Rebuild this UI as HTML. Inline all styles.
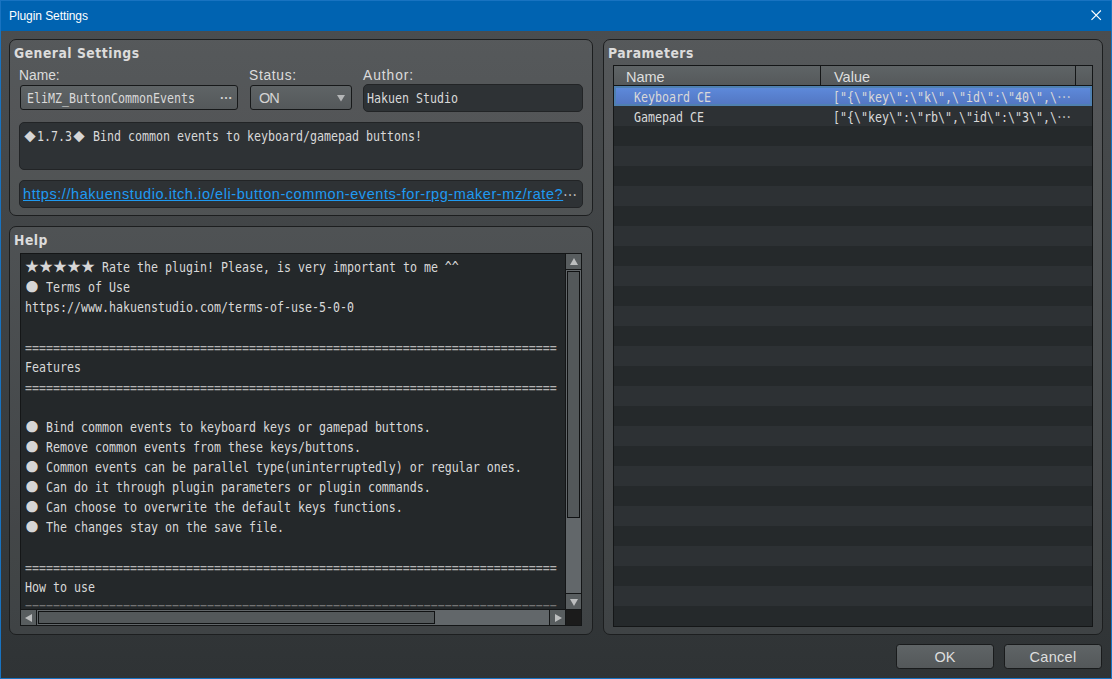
<!DOCTYPE html>
<html lang="en">
<head>
<meta charset="utf-8">
<title>Plugin Settings</title>
<style>
html,body{margin:0;padding:0;}
body{width:1112px;height:679px;overflow:hidden;background:#1873c1;font-family:"Liberation Sans",sans-serif;color:#dedede;}
*{box-sizing:border-box;}
#win{position:absolute;left:0;top:0;width:1112px;height:679px;background:#1873c1;overflow:hidden;}
#title{position:absolute;left:1px;top:1px;width:1110px;height:30px;background:#0063b1;}
#title .t{position:absolute;left:8px;top:7px;font-size:12px;line-height:16px;color:#fff;white-space:pre;letter-spacing:-0.08px;}
#client{position:absolute;left:1px;top:31px;width:1110px;height:647px;background:linear-gradient(#4a4d4f,#2f3335);}
.abs{position:absolute;}
.grp{position:absolute;border:1px solid #1c1e1f;border-radius:7px;background:rgba(255,255,255,0.07);box-shadow:inset 0 0 0 0 #000;}
.gt{position:absolute;font-family:"DejaVu Sans Condensed","DejaVu Sans","Liberation Sans",sans-serif;font-weight:bold;font-size:13.8px;line-height:18px;color:#dcdcdc;white-space:pre;letter-spacing:0.5px;}
.lb{position:absolute;font-size:13.8px;line-height:16px;color:#dcdcdc;white-space:pre;letter-spacing:-0.45px;}
.fld{position:absolute;border:1px solid #17191a;border-radius:3px;background:linear-gradient(#5f6466,#54585a);}
.dark{position:absolute;border:1px solid #222426;border-radius:5px;background:#2e3235;}
.m{position:absolute;font-family:"DejaVu Sans Mono","Liberation Mono",monospace;font-size:13.6px;line-height:20px;height:20px;white-space:pre;transform:scaleX(0.855);transform-origin:0 0;color:#d9d9d9;}
.s{position:absolute;font-family:"Noto Sans CJK JP","DejaVu Sans",sans-serif;font-size:14px;line-height:20px;height:20px;width:14px;text-align:center;color:#d6d6d6;white-space:pre;}
.btn{position:absolute;border:1px solid #191b1c;border-radius:3.5px;background:linear-gradient(#5f6466,#54585a);text-align:center;font-size:14.5px;line-height:25px;color:#dedede;}

.st{font-size:14px;}
.ci{font-size:12.5px;}
.eq{color:#b4b4b4;}
.sbb{background:#585d5f;}
.thumb{background:#53585a;border:1px solid #101213;}
.hdr{background:linear-gradient(#5f6466,#55595b);}
.hd{font-size:14.5px;line-height:18px;color:#dedede;white-space:pre;}
.sel{background:linear-gradient(#5d89da,#5377c3);border:2px solid #4f80b0;}
</style>
</head>
<body>
<div id="win">
<div id="title"><span class="t">Plugin Settings</span>
<svg class="abs" style="left:1089px;top:8px" width="13" height="13" viewBox="0 0 13 13"><path d="M1.5 1.5 L10.9 10.9 M10.9 1.5 L1.5 10.9" stroke="#fff" stroke-width="1.1" fill="none"/></svg>
</div>
<div id="client"></div>

<!-- General Settings -->
<div class="grp" style="left:9px;top:39px;width:584px;height:177px"></div>
<div class="gt" style="left:14px;top:44px">General Settings</div>
<div class="lb" style="left:19px;top:68px;letter-spacing:0">Name:</div>
<div class="lb" style="left:249px;top:68px;letter-spacing:0.7px">Status:</div>
<div class="lb" style="left:363px;top:68px;letter-spacing:0.95px">Author:</div>
<div class="fld" style="left:20px;top:85px;width:218px;height:25px"></div>
<div class="m" style="left:27px;top:88px">EliMZ_ButtonCommonEvents</div>
<div class="s" style="left:219px;top:88px;font-weight:bold;font-size:12.5px">⋯</div>
<div class="fld" style="left:250px;top:85px;width:102px;height:25px"></div>
<div class="abs" style="left:259px;top:89px;font-size:14.5px;line-height:18px;color:#d4d4d4;letter-spacing:-1px">ON</div>
<svg class="abs" style="left:337px;top:95px" width="8" height="7" viewBox="0 0 8 7"><path d="M0 0 H8 L4 6.5 Z" fill="#b4b6b7"/></svg>
<div class="dark" style="left:363px;top:84px;width:220px;height:28px"></div>
<div class="m" style="left:367px;top:88px">Hakuen Studio</div>
<div class="dark" style="left:19px;top:122px;width:564px;height:48px"></div>
<div class="s" style="left:23px;top:126px;font-size:11.5px">◆</div>
<div class="m" style="left:37px;top:126px">1.7.3</div>
<div class="s" style="left:72px;top:126px;font-size:11.5px">◆</div>
<div class="m" style="left:86px;top:126px"> Bind common events to keyboard/gamepad buttons!</div>
<div class="dark" style="left:19px;top:180px;width:564px;height:28px"></div>
<div class="abs" id="url" style="left:23px;top:185px;font-size:14.5px;line-height:18px;color:#1f9af2;text-decoration:underline;white-space:pre;letter-spacing:0.565px">https://hakuenstudio.itch.io/eli-button-common-events-for-rpg-maker-mz/rate?</div>
<div class="s" style="left:563px;top:184px">⋯</div>

<!-- Help -->
<div class="grp" style="left:9px;top:226px;width:584px;height:409px"></div>
<div class="gt" style="left:14px;top:231px">Help</div>
<div id="help" class="abs" style="left:20px;top:253px;width:562px;height:373px;background:#24282a;border:1px solid #141617;overflow:hidden">
<div class="abs" style="left:0;top:0;width:544px;height:355px;overflow:hidden">
<div class="s st" style="left:4px;top:1px">★</div>
<div class="s st" style="left:18px;top:1px">★</div>
<div class="s st" style="left:32px;top:1px">★</div>
<div class="s st" style="left:46px;top:1px">★</div>
<div class="s st" style="left:60px;top:1px">★</div>
<div class="m" style="left:74px;top:3px"> Rate the plugin! Please, is very important to me ^^</div>
<div class="s ci" style="left:4px;top:23px">●</div>
<div class="m" style="left:18px;top:23px"> Terms of Use</div>
<div class="m" style="left:4px;top:43px">https://www.hakuenstudio.com/terms-of-use-5-0-0</div>
<div class="m eq" style="left:4px;top:84px">============================================================================</div>
<div class="m" style="left:4px;top:103px">Features</div>
<div class="m eq" style="left:4px;top:124px">============================================================================</div>
<div class="s ci" style="left:4px;top:163px">●</div>
<div class="m" style="left:18px;top:163px"> Bind common events to keyboard keys or gamepad buttons.</div>
<div class="s ci" style="left:4px;top:183px">●</div>
<div class="m" style="left:18px;top:183px"> Remove common events from these keys/buttons.</div>
<div class="s ci" style="left:4px;top:203px">●</div>
<div class="m" style="left:18px;top:203px"> Common events can be parallel type(uninterruptedly) or regular ones.</div>
<div class="s ci" style="left:4px;top:223px">●</div>
<div class="m" style="left:18px;top:223px"> Can do it through plugin parameters or plugin commands.</div>
<div class="s ci" style="left:4px;top:243px">●</div>
<div class="m" style="left:18px;top:243px"> Can choose to overwrite the default keys functions.</div>
<div class="s ci" style="left:4px;top:263px">●</div>
<div class="m" style="left:18px;top:263px"> The changes stay on the save file.</div>
<div class="m eq" style="left:4px;top:304px">============================================================================</div>
<div class="m" style="left:4px;top:323px">How to use</div>
<div class="abs" style="left:0;top:343px;width:544px;height:10px;overflow:hidden"><div class="m eq" style="left:4px;top:0;color:#747474">============================================================================</div></div>
</div>
<div class="abs" style="left:544px;top:0;width:1px;height:355px;background:#141617"></div>
<div class="abs" style="left:545px;top:0;width:15px;height:355px;background:#62676a"></div>
<div class="abs sbb" style="left:545px;top:0;width:15px;height:15px"></div>
<svg class="abs" style="left:549px;top:4px" width="8" height="7" viewBox="0 0 8 7"><path d="M4 0 L8 7 H0 Z" fill="#bcbebf"/></svg>
<div class="abs" style="left:545px;top:15px;width:15px;height:1px;background:#141617"></div>
<div class="abs thumb" style="left:546px;top:17px;width:13px;height:247px"></div>
<div class="abs" style="left:545px;top:339px;width:15px;height:1px;background:#141617"></div>
<div class="abs sbb" style="left:545px;top:340px;width:15px;height:15px"></div>
<svg class="abs" style="left:549px;top:345px" width="8" height="7" viewBox="0 0 8 7"><path d="M0 0 H8 L4 7 Z" fill="#bcbebf"/></svg>
<div class="abs" style="left:0;top:355px;width:560px;height:1px;background:#141617"></div>
<div class="abs" style="left:0;top:356px;width:545px;height:15px;background:#62676a"></div>
<div class="abs sbb" style="left:0;top:356px;width:15px;height:15px"></div>
<svg class="abs" style="left:4px;top:360px" width="7" height="8" viewBox="0 0 7 8"><path d="M0 4 L7 0 V8 Z" fill="#bcbebf"/></svg>
<div class="abs" style="left:15px;top:356px;width:1px;height:15px;background:#141617"></div>
<div class="abs thumb" style="left:17px;top:357px;width:397px;height:13px"></div>
<div class="abs" style="left:528px;top:356px;width:1px;height:15px;background:#141617"></div>
<div class="abs sbb" style="left:529px;top:356px;width:15px;height:15px"></div>
<svg class="abs" style="left:534px;top:360px" width="7" height="8" viewBox="0 0 7 8"><path d="M7 4 L0 0 V8 Z" fill="#bcbebf"/></svg>
<div class="abs" style="left:544px;top:356px;width:1px;height:15px;background:#141617"></div>
<div class="abs" style="left:545px;top:356px;width:15px;height:15px;background:#1b1b1b"></div>

</div>

<!-- Parameters -->
<div class="grp" style="left:603px;top:39px;width:500px;height:596px"></div>
<div class="gt" style="left:608px;top:44px">Parameters</div>
<div id="tbl" class="abs" style="left:613px;top:65px;width:480px;height:562px;background:#25292b;border:1px solid #141617;overflow:hidden">
<div class="abs hdr" style="left:0;top:0;width:478px;height:19px"></div>
<div class="abs" style="left:0;top:19px;width:478px;height:1px;background:#141617"></div>
<div class="abs" style="left:206px;top:0;width:1px;height:19px;background:#141617"></div>
<div class="abs" style="left:461px;top:0;width:1px;height:19px;background:#141617"></div>
<div class="abs hd" style="left:12px;top:2px">Name</div>
<div class="abs hd" style="left:220px;top:2px">Value</div>
<div class="abs sel" style="left:0;top:20px;width:478px;height:20px"></div>
<div class="abs" style="left:0;top:40px;width:478px;height:20px;background:#2d3134"></div>
<div class="abs" style="left:0;top:80px;width:478px;height:20px;background:#2d3134"></div>
<div class="abs" style="left:0;top:120px;width:478px;height:20px;background:#2d3134"></div>
<div class="abs" style="left:0;top:160px;width:478px;height:20px;background:#2d3134"></div>
<div class="abs" style="left:0;top:200px;width:478px;height:20px;background:#2d3134"></div>
<div class="abs" style="left:0;top:240px;width:478px;height:20px;background:#2d3134"></div>
<div class="abs" style="left:0;top:280px;width:478px;height:20px;background:#2d3134"></div>
<div class="abs" style="left:0;top:320px;width:478px;height:20px;background:#2d3134"></div>
<div class="abs" style="left:0;top:360px;width:478px;height:20px;background:#2d3134"></div>
<div class="abs" style="left:0;top:400px;width:478px;height:20px;background:#2d3134"></div>
<div class="abs" style="left:0;top:440px;width:478px;height:20px;background:#2d3134"></div>
<div class="abs" style="left:0;top:480px;width:478px;height:20px;background:#2d3134"></div>
<div class="abs" style="left:0;top:520px;width:478px;height:20px;background:#2d3134"></div>
<div class="m" style="left:20px;top:21px">Keyboard CE</div>
<div class="m" style="left:219px;top:21px">["{\"key\":\"k\",\"id\":\"40\",\</div>
<div class="s" style="left:443px;top:20px">⋯</div>
<div class="m" style="left:20px;top:41px">Gamepad CE</div>
<div class="m" style="left:219px;top:41px">["{\"key\":\"rb\",\"id\":\"3\",\</div>
<div class="s" style="left:443px;top:40px">⋯</div>
</div>

<div class="btn" style="left:896px;top:644px;width:98px;height:25px">OK</div>
<div class="btn" style="left:1004px;top:644px;width:98px;height:25px;letter-spacing:0.3px">Cancel</div>
</div>
</body>
</html>
